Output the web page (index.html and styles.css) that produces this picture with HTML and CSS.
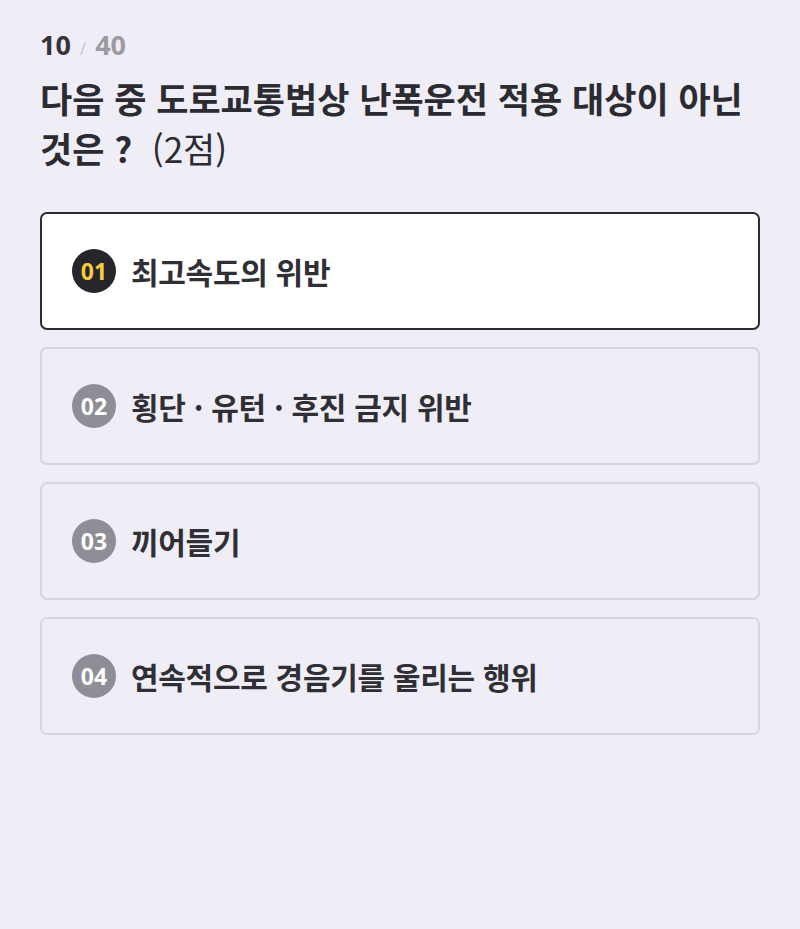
FILE: index.html
```html
<!DOCTYPE html>
<html lang="ko">

<head>
  <meta charset="UTF-8">
  <title>문제 10</title>
  <link rel="stylesheet" href="styles.css">
</head>

<body>
  <div class="quiz">
    <div class="counter">
      <span class="current">10</span>
      <span class="slash">/</span>
      <span class="total">40</span>
    </div>
    <h1 class="question">다음 중 도로교통법상 난폭운전 적용 대상이 아닌<br>것은 ?&nbsp; <span class="point">(2점)</span></h1>

    <div class="options">
      <div class="option selected">
        <span class="num">01</span>
        <span class="label">최고속도의 위반</span>
      </div>
      <div class="option">
        <span class="num">02</span>
        <span class="label">횡단 · 유턴 · 후진 금지 위반</span>
      </div>
      <div class="option">
        <span class="num">03</span>
        <span class="label">끼어들기</span>
      </div>
      <div class="option">
        <span class="num">04</span>
        <span class="label">연속적으로 경음기를 울리는 행위</span>
      </div>
    </div>
  </div>
</body>

</html>
```

FILE: styles.css
```css
html,
body {
  margin: 0;
  padding: 0;
  background: #efeef7;
  font-family: "Noto Sans CJK KR", "Noto Sans", sans-serif;
  color: #2b2b31;
}

.quiz {
  padding: 28px 40px 0;
}

.counter {
  display: flex;
  align-items: baseline;
  gap: 9px;
  font-family: "Noto Sans", sans-serif;
  font-size: 27px;
  font-weight: 700;
  line-height: 34px;
}

.current {
  color: #333338;
}

.slash {
  font-weight: 300;
  font-size: 18px;
  color: #b8b8c0;
}

.total {
  color: #9a9aa0;
}

.question {
  margin: 8px 0 0;
  font-size: 35px;
  font-weight: 700;
  line-height: 50px;
  letter-spacing: 0;
  color: #2b2b31;
}

.point {
  font-weight: 400;
}

.options {
  display: flex;
  flex-direction: column;
  gap: 17px;
  margin-top: 39px;
}

.option {
  display: flex;
  align-items: center;
  gap: 15px;
  height: 118px;
  box-sizing: border-box;
  padding: 0 30px;
  border: 2px solid #d7d6de;
  border-radius: 7px;
}

.option.selected {
  background: #ffffff;
  border-color: #2b2b33;
}

.num {
  display: flex;
  align-items: center;
  justify-content: center;
  width: 44px;
  height: 44px;
  border-radius: 50%;
  background: #8e8e96;
  color: #ffffff;
  font-family: "Noto Sans", sans-serif;
  font-size: 23px;
  font-weight: 700;
}

.selected .num {
  background: #25252b;
  color: #f6cd3c;
}

.label {
  font-size: 30px;
  font-weight: 700;
  letter-spacing: -0.3px;
  color: #2f2f35;
}
```
